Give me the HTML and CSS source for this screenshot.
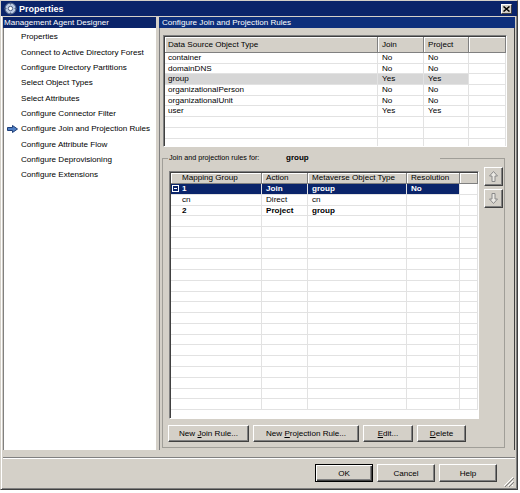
FILE: index.html
```html
<!DOCTYPE html>
<html lang="en">

<head>
    <meta charset="UTF-8">
    <title>Properties</title>
    <link rel="stylesheet" href="styles.css">
</head>

<body>
    <div class="window">
        <div class="titlebar">
            <svg class="app-icon" width="13" height="13" viewBox="0 0 13 13">
                <circle cx="6.5" cy="6.5" r="5.5" fill="#b9c9e2" stroke="#4d5f82" />
                <circle cx="6.5" cy="6.5" r="2.2" fill="#fff" stroke="#4d5f82" />
                <path d="M6.5 0.5v2M6.5 10.5v2M0.5 6.5h2M10.5 6.5h2" stroke="#4d5f82" />
            </svg>
            <span class="title">Properties</span>
            <div class="close">
                <svg width="7" height="6" viewBox="0 0 7 6">
                    <path d="M0.5 0.5l6 5M6.5 0.5l-6 5" stroke="#000" stroke-width="1.5" />
                </svg>
            </div>
        </div>

        <div class="panes">
            <div class="left">
                <div class="pane-head">Management Agent Designer</div>
                <ul class="nav">
                    <li><span class="mark"></span>Properties</li>
                    <li><span class="mark"></span>Connect to Active Directory Forest</li>
                    <li><span class="mark"></span>Configure Directory Partitions</li>
                    <li><span class="mark"></span>Select Object Types</li>
                    <li><span class="mark"></span>Select Attributes</li>
                    <li><span class="mark"></span>Configure Connector Filter</li>
                    <li>
                        <span class="mark">
                            <svg width="11" height="8" viewBox="0 0 11 8">
                                <path d="M0.5 2.5h5v-2l5 3.5-5 3.5v-2h-5z" fill="#4f7fc4" stroke="#1f3f78" />
                            </svg>
                        </span>Configure Join and Projection Rules
                    </li>
                    <li><span class="mark"></span>Configure Attribute Flow</li>
                    <li><span class="mark"></span>Configure Deprovisioning</li>
                    <li><span class="mark"></span>Configure Extensions</li>
                </ul>
            </div>

            <div class="right">
                <div class="pane-head pane-head-right">Configure Join and Projection Rules</div>
                <div class="pane-body">
                    <!-- object types -->
                    <div class="frame types">
                        <div class="grid">
                            <div class="row head">
                                <div>Data Source Object Type</div>
                                <div>Join</div>
                                <div>Project</div>
                                <div></div>
                            </div>
                            <div class="row"><div>container</div><div>No</div><div>No</div><div></div></div>
                            <div class="row"><div>domainDNS</div><div>No</div><div>No</div><div></div></div>
                            <div class="row row-gray"><div>group</div><div>Yes</div><div>Yes</div><div></div></div>
                            <div class="row"><div>organizationalPerson</div><div>No</div><div>No</div><div></div></div>
                            <div class="row"><div>organizationalUnit</div><div>No</div><div>No</div><div></div></div>
                            <div class="row"><div>user</div><div>Yes</div><div>Yes</div><div></div></div>
                            <div class="row"><div></div><div></div><div></div><div></div></div>
                            <div class="row"><div></div><div></div><div></div><div></div></div>
                            <div class="row"><div></div><div></div><div></div><div></div></div>
                        </div>
                    </div>

                    <!-- rules for the selected type -->
                    <fieldset class="rules">
                        <legend><span class="lbl">Join and projection rules for:</span><b>group</b></legend>
                        <div class="rules-body">
                            <div class="frame mappings">
                                <div class="grid">
                                    <div class="row head">
                                        <div>Mapping Group</div>
                                        <div>Action</div>
                                        <div>Metaverse Object Type</div>
                                        <div>Resolution</div>
                                        <div></div>
                                    </div>
                                    <div class="row row-sel">
                                        <div class="first"><span class="minus"></span>1</div>
                                        <div>Join</div>
                                        <div>group</div>
                                        <div>No</div>
                                        <div></div>
                                    </div>
                                    <div class="row">
                                        <div class="sub">cn</div>
                                        <div>Direct</div>
                                        <div>cn</div>
                                        <div></div>
                                        <div></div>
                                    </div>
                                    <div class="row row-bold">
                                        <div class="sub">2</div>
                                        <div>Project</div>
                                        <div>group</div>
                                        <div></div>
                                        <div></div>
                                    </div>
                                    <div class="row"><div></div><div></div><div></div><div></div><div></div></div>
                                    <div class="row"><div></div><div></div><div></div><div></div><div></div></div>
                                    <div class="row"><div></div><div></div><div></div><div></div><div></div></div>
                                    <div class="row"><div></div><div></div><div></div><div></div><div></div></div>
                                    <div class="row"><div></div><div></div><div></div><div></div><div></div></div>
                                    <div class="row"><div></div><div></div><div></div><div></div><div></div></div>
                                    <div class="row"><div></div><div></div><div></div><div></div><div></div></div>
                                    <div class="row"><div></div><div></div><div></div><div></div><div></div></div>
                                    <div class="row"><div></div><div></div><div></div><div></div><div></div></div>
                                    <div class="row"><div></div><div></div><div></div><div></div><div></div></div>
                                    <div class="row"><div></div><div></div><div></div><div></div><div></div></div>
                                    <div class="row"><div></div><div></div><div></div><div></div><div></div></div>
                                    <div class="row"><div></div><div></div><div></div><div></div><div></div></div>
                                    <div class="row"><div></div><div></div><div></div><div></div><div></div></div>
                                    <div class="row"><div></div><div></div><div></div><div></div><div></div></div>
                                    <div class="row"><div></div><div></div><div></div><div></div><div></div></div>
                                    <div class="row"><div></div><div></div><div></div><div></div><div></div></div>
                                    <div class="row"><div></div><div></div><div></div><div></div><div></div></div>
                                </div>
                            </div>
                            <div class="updown">
                                <button class="btn sq">
                                    <svg width="9" height="11" viewBox="0 0 9 11">
                                        <path d="M4.5 0.5l4 4.5h-2.5v5.5h-3v-5.5h-2.5z" fill="#ebe9e4" stroke="#8a8a8a" />
                                    </svg>
                                </button>
                                <button class="btn sq">
                                    <svg width="9" height="11" viewBox="0 0 9 11">
                                        <path d="M4.5 10.5l4-4.5h-2.5v-5.5h-3v5.5h-2.5z" fill="#ebe9e4" stroke="#8a8a8a" />
                                    </svg>
                                </button>
                            </div>
                        </div>
                        <div class="rule-buttons">
                            <button class="btn w-join"><span>New <u>J</u>oin Rule...</span></button>
                            <button class="btn w-proj"><span>New <u>P</u>rojection Rule...</span></button>
                            <button class="btn w-edit"><span><u>E</u>dit...</span></button>
                            <button class="btn w-del"><span><u>D</u>elete</span></button>
                        </div>
                    </fieldset>
                </div>
            </div>
        </div>

        <div class="sep"></div>
        <div class="footer">
            <button class="btn dlg default">OK</button>
            <button class="btn dlg">Cancel</button>
            <button class="btn dlg">Help</button>
            <svg class="grip" width="11" height="11" viewBox="0 0 11 11">
                <path d="M10 1L1 10M10 5L5 10M10 9L9 10" stroke="#fff" />
                <path d="M11 2L2 11M11 6L6 11" stroke="#808080" />
            </svg>
        </div>
    </div>
</body>

</html>
```

FILE: styles.css
```css
* {
    margin: 0;
    padding: 0;
    box-sizing: border-box;
}

body {
    background-color: #fff;
    font-family: "Liberation Sans", Arial, sans-serif;
    font-size: 8.1px;
    color: #000;
}

.window {
    width: 518px;
    height: 490px;
    background-color: #d4d0c8;
    border: 1px solid;
    border-color: #d4d0c8 #404040 #404040 #d4d0c8;
    box-shadow: inset 1px 1px 0 #fff, inset -1px -1px 0 #808080;
    padding: 0 2px;
    display: flex;
    flex-direction: column;
}

/* title bar */
.titlebar {
    height: 15px;
    margin: 0 -2px;
    padding: 0 5px 0 3px;
    background-color: #0a246a;
    color: #fff;
    display: flex;
    align-items: center;
}

.app-icon {
    margin-right: 2px;
}

.title {
    font-weight: bold;
    font-size: 9px;
}

.close {
    margin-left: auto;
    width: 11px;
    height: 10px;
    background-color: #d4d0c8;
    border: 1px solid;
    border-color: #fff #404040 #404040 #fff;
    display: flex;
    align-items: center;
    justify-content: center;
}

/* two panes */
.panes {
    height: 433px;
    margin-top: 1px;
    display: flex;
    gap: 3px;
}

.left {
    width: 153px;
    display: flex;
    flex-direction: column;
}

.pane-head {
    height: 11px;
    line-height: 11px;
    background-color: #0a246a;
    color: #fff;
    padding-left: 1px;
    white-space: nowrap;
}

.nav {
    flex: 1;
    list-style: none;
    background-color: #fff;
    border-left: 1px solid #808080;
    padding-top: 1.3px;
}

.nav li {
    height: 15.33px;
    display: flex;
    align-items: center;
    white-space: nowrap;
}

.mark {
    width: 17px;
    display: flex;
    justify-content: center;
}

.right {
    flex: 1;
    display: flex;
    flex-direction: column;
}

.pane-head-right {
    background-color: #0d2f7c;
    padding-left: 3px;
}

.pane-body {
    flex: 1;
    border-left: 1px solid #808080;
    border-right: 1px solid #404040;
    padding: 7px 6px 0 3px;
}

/* list views */
.frame {
    background-color: #fff;
    border: 1px solid;
    border-color: #808080 #fff #fff #808080;
    overflow: hidden;
}

.grid {
    height: 100%;
    border-left: 1px solid #404040;
    border-top: 1px solid #404040;
}

.row {
    display: grid;
    height: 10.7px;
    line-height: 10px;
    border-bottom: 1px solid #e2e2e2;
}

.row>div {
    border-right: 1px solid #e2e2e2;
    padding-left: 4px;
    white-space: nowrap;
    overflow: hidden;
}

.row>div:first-child {
    padding-left: 3px;
}

.row.head {
    background-color: #d4d0c8;
    border-bottom: 1px solid #808080;
}

.row.head>div {
    border-right: 1px solid #808080;
    box-shadow: inset 1px 1px 0 #fff;
}

.types {
    width: 344px;
    height: 112px;
}

.types .row {
    grid-template-columns: 213px 46px 45px 1fr;
}

.types .row.head {
    height: 16px;
    line-height: 15px;
}

.row-gray>div:not(:last-child) {
    background-color: #d6d6d6;
}

/* group box */
.rules {
    width: 343px;
    margin: 6px 0 0 -1px;
    border: 1px solid #a09e98;
    padding: 0 0 5px;
}

.rules legend {
    width: 272px;
    height: 10px;
    line-height: 10px;
    margin-left: 5px;
    padding-left: 1px;
    white-space: nowrap;
}

.rules .lbl {
    display: inline-block;
    width: 117px;
    font-size: 7.2px;
}

.rules legend b {
    font-size: 8px;
}

.rules-body {
    display: flex;
    padding: 4px 0 0 6px;
}

.mappings {
    width: 310px;
    height: 248px;
    margin-top: 4px;
}

.mappings .row {
    grid-template-columns: 91px 46px 99px 53px 1fr;
    height: 10.77px;
}

.mappings .row.head {
    height: 11px;
    line-height: 10px;
}

.mappings .row>div:first-child {
    padding-left: 11px;
}

.mappings .row>div.first {
    padding-left: 1px;
    display: flex;
    align-items: center;
}

.minus {
    width: 7px;
    height: 7px;
    border: 1px solid #fff;
    margin-right: 3px;
    position: relative;
}

.minus::after {
    content: '';
    position: absolute;
    left: 1px;
    right: 1px;
    top: 2px;
    height: 1px;
    background-color: #fff;
}

.row-sel>div:not(:last-child) {
    background-color: #0a246a;
    color: #fff;
    font-weight: bold;
}

.row-bold>div {
    font-weight: bold;
}

.updown {
    margin-left: 5px;
    display: flex;
    flex-direction: column;
    gap: 3px;
}

/* buttons */
.btn {
    height: 17px;
    font-family: inherit;
    font-size: 8.1px;
    color: #000;
    background-color: #d4d0c8;
    border: 1px solid;
    border-color: #fff #404040 #404040 #fff;
    box-shadow: inset -1px -1px 0 #808080;
    display: flex;
    align-items: center;
    justify-content: center;
    white-space: nowrap;
}

.btn.sq {
    width: 19px;
    height: 19px;
}

.rule-buttons {
    display: flex;
    gap: 4px;
    margin-top: 6px;
    padding-left: 5px;
}

.w-join {
    width: 81px;
}

.w-proj {
    width: 106px;
}

.w-edit {
    width: 50px;
}

.w-del {
    width: 49px;
}

/* bottom bar */
.sep {
    margin-top: 7px;
    border-top: 1px solid #808080;
    border-bottom: 1px solid #fff;
}

.footer {
    height: 24px;
    margin-top: 5px;
    display: flex;
    justify-content: flex-end;
    gap: 4px;
}

.btn.dlg {
    width: 58px;
    height: 18px;
}

.btn.default {
    border: 1px solid #000;
    box-shadow: inset 1px 1px 0 #fff, inset -1px -1px 0 #404040, inset -2px -2px 0 #808080;
}

.grip {
    align-self: flex-end;
    margin: 0 1px 1px 2px;
}
```
